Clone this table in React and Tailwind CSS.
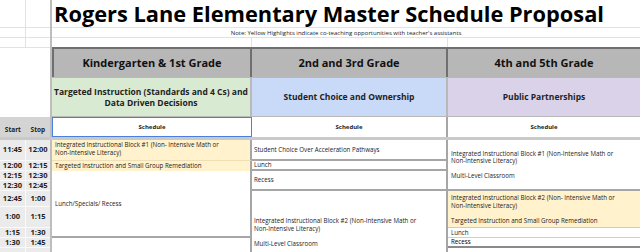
function Time({ row, start, stop }) {
  return (
    <>
      <div className={`${row} col-start-1 flex items-center justify-center bg-[#ebebeb] border-b border-r border-[#fafafa] text-[7.5px] font-bold text-[#222]`}>
        {start}
      </div>
      <div className={`${row} col-start-2 flex items-center justify-center bg-[#ebebeb] border-b border-[#fafafa] text-[7.5px] font-bold text-[#222]`}>
        {stop}
      </div>
    </>
  );
}

export default function App() {
  return (
    <div className="h-[252px] w-[640px] overflow-hidden bg-white font-['Open_Sans',sans-serif] text-[#222]">
      <div className="grid grid-cols-[26px_24px_2px_200px_196px_192px] grid-rows-[28px_10px_9px_30px_40px_20px_3px_21px_10px_10px_10px_16px_21px_10px_10px_10px_15px]">
        {/* left top gridlines */}
        <div className="col-start-1 row-start-1 border-b border-r border-[#e2e2e2]" />
        <div className="col-start-2 row-start-1 border-b border-[#e2e2e2]" />
        <div className="col-start-1 row-start-2 border-b border-r border-[#e2e2e2]" />
        <div className="col-start-2 row-start-2 border-b border-[#e2e2e2]" />
        <div className="col-start-1 row-start-3 border-r border-[#e2e2e2]" />
        <div className="col-start-1 col-span-2 row-start-4 row-span-2 border-t border-[#e2e2e2]" />
        <div className="col-start-1 col-span-2 row-start-6 flex items-end justify-around bg-[#d4d4d4] pb-[2px] text-[6.5px] font-bold">
          <span>Start</span>
          <span>Stop</span>
        </div>

        {/* frozen pane lines */}
        <div className="col-start-3 row-start-1 row-span-17 bg-[#bdbdbd]" />
        <div className="col-span-full row-start-7 bg-[#c9c9c9]" />

        {/* title + note */}
        <div className="col-start-4 col-span-3 row-start-1 border-b border-[#e2e2e2] whitespace-nowrap pl-[2px] pt-[1px] text-[21.8px] font-bold leading-[25px] text-black">
          Rogers Lane Elementary Master Schedule Proposal
        </div>
        <div className="col-start-4 col-span-3 row-start-2 flex items-center justify-center border-b border-[#e2e2e2] text-[6px] leading-none">
          Note: Yellow Highlights indicate co-teaching opportunities with teacher's assistants
        </div>
        <div className="col-start-4 row-start-3 border-r border-[#e2e2e2]" />
        <div className="col-start-5 row-start-3 border-r border-[#e2e2e2]" />

        {/* grade headers */}
        <div className="col-start-4 row-start-4 flex items-center justify-center border-l-2 border-r-2 border-t-2 border-[#6f6f6f] bg-[#b7b7b7] text-[11px] font-bold text-[#111]">
          Kindergarten &amp; 1st Grade
        </div>
        <div className="col-start-5 row-start-4 flex items-center justify-center border-t-2 border-r-2 border-[#6f6f6f] bg-[#b7b7b7] text-[11px] font-bold text-[#111]">
          2nd and 3rd Grade
        </div>
        <div className="col-start-6 row-start-4 flex items-center justify-center border-t-2 border-[#6f6f6f] bg-[#b7b7b7] text-[11px] font-bold text-[#111]">
          4th and 5th Grade
        </div>

        {/* themes */}
        <div className="col-start-4 row-start-5 flex items-center justify-center border-t border-b border-r-2 border-[#b9b9b9] bg-[#d9ead3] text-center text-[8.5px] font-bold leading-[11px]">
          Targeted Instruction (Standards and 4 Cs) and
          <br />
          Data Driven Decisions
        </div>
        <div className="col-start-5 row-start-5 flex items-center justify-center border-t border-b border-r-2 border-[#b9b9b9] bg-[#c9daf8] text-[8.5px] font-bold">
          Student Choice and Ownership
        </div>
        <div className="col-start-6 row-start-5 flex items-center justify-center border-t border-b border-[#b9b9b9] bg-[#d9d2e9] text-[8.5px] font-bold">
          Public Partnerships
        </div>

        {/* schedule labels */}
        <div className="col-start-4 row-start-6 flex items-center justify-center border border-[#4a7fe0] bg-white text-[6px] font-bold">
          Schedule
        </div>
        <div className="col-start-5 row-start-6 flex items-center justify-center border-r-2 border-[#a6a6a6] bg-white text-[6px] font-bold">
          Schedule
        </div>
        <div className="col-start-6 row-start-6 flex items-center justify-center bg-white text-[6px] font-bold">
          Schedule
        </div>

        {/* times */}
        <Time row="row-start-8" start="11:45" stop="12:00" />
        <Time row="row-start-9" start="12:00" stop="12:15" />
        <Time row="row-start-10" start="12:15" stop="12:30" />
        <Time row="row-start-11" start="12:30" stop="12:45" />
        <Time row="row-start-12" start="12:45" stop="1:00" />
        <Time row="row-start-13" start="1:00" stop="1:15" />
        <Time row="row-start-14" start="1:15" stop="1:30" />
        <Time row="row-start-15" start="1:30" stop="1:45" />
        <div className="col-start-1 row-start-16 row-span-2 border-r border-[#fafafa] bg-[#ebebeb]" />
        <div className="col-start-2 row-start-16 row-span-2 bg-[#ebebeb]" />

        {/* K-1 column */}
        <div className="col-start-4 row-start-8 border-b border-r-2 border-b-[#eedfb4] border-r-[#a6a6a6] bg-[#fff2cc] pl-[3px] pt-px text-[6.2px] leading-[7.5px]">
          Integrated Instructional Block #1 (Non- Intensive Math or
          <br />
          Non-Intensive Literacy)
        </div>
        <div className="col-start-4 row-start-9 flex items-center border-r-2 border-[#a6a6a6] bg-[#fff2cc] pl-[3px] text-[6.2px]">
          Targeted Instruction and Small Group Remediation
        </div>
        <div className="col-start-4 row-start-10 row-span-5 flex items-center border-b-2 border-r-2 border-[#a6a6a6] bg-white pl-[3px] text-[6.2px]">
          Lunch/Specials/ Recess
        </div>
        <div className="col-start-4 row-start-15 row-span-3 border-r-2 border-[#a6a6a6] bg-white" />

        {/* 2-3 column */}
        <div className="col-start-5 row-start-8 flex items-center border-b-2 border-r-2 border-[#a6a6a6] pl-[2px] text-[6.2px]">
          Student Choice Over Acceleration Pathways
        </div>
        <div className="col-start-5 row-start-9 flex items-center border-b-2 border-r-2 border-[#a6a6a6] pl-[2px] text-[6.2px]">
          Lunch
        </div>
        <div className="col-start-5 row-start-10 row-span-2 flex items-center border-b-2 border-r-2 border-[#a6a6a6] pl-[2px] text-[6.2px]">
          Recess
        </div>
        <div className="col-start-5 row-start-12 row-span-6 flex flex-col justify-center border-r-2 border-[#a6a6a6] pl-[2px] text-[6.2px] leading-[7.5px]">
          <span>Integrated Instructional Block #2 (Non-Intensive Math or</span>
          <span>Non-Intensive Literacy)</span>
          <span className="h-[7.5px]" />
          <span>Multi-Level Classroom</span>
        </div>

        {/* 4-5 column */}
        <div className="col-start-6 row-start-8 row-span-4 flex flex-col justify-center border-b-2 border-[#a6a6a6] pl-[3px] text-[6.2px] leading-[7.5px]">
          <span>Integrated Instructional Block #1 (Non-Intensive Math or</span>
          <span>Non-Intensive Literacy)</span>
          <span className="h-[7.5px]" />
          <span>Multi-Level Classroom</span>
        </div>
        <div className="col-start-6 row-start-12 row-span-2 flex flex-col justify-center border-b border-[#d8cba6] bg-[#fff2cc] pl-[3px] text-[6.2px] leading-[7.5px]">
          <span>Integrated Instructional Block #2 (Non- Intensive Math or</span>
          <span>Non-Intensive Literacy)</span>
          <span className="h-[7.5px]" />
          <span>Targeted Instruction and Small Group Remediation</span>
        </div>
        <div className="col-start-6 row-start-14 flex items-center border-b border-[#cfcfcf] pl-[3px] text-[6.2px]">
          Lunch
        </div>
        <div className="col-start-6 row-start-15 flex items-center border-b-2 border-[#8a8a8a] pl-[3px] text-[6.2px] text-black">
          Recess
        </div>
      </div>
    </div>
  );
}
